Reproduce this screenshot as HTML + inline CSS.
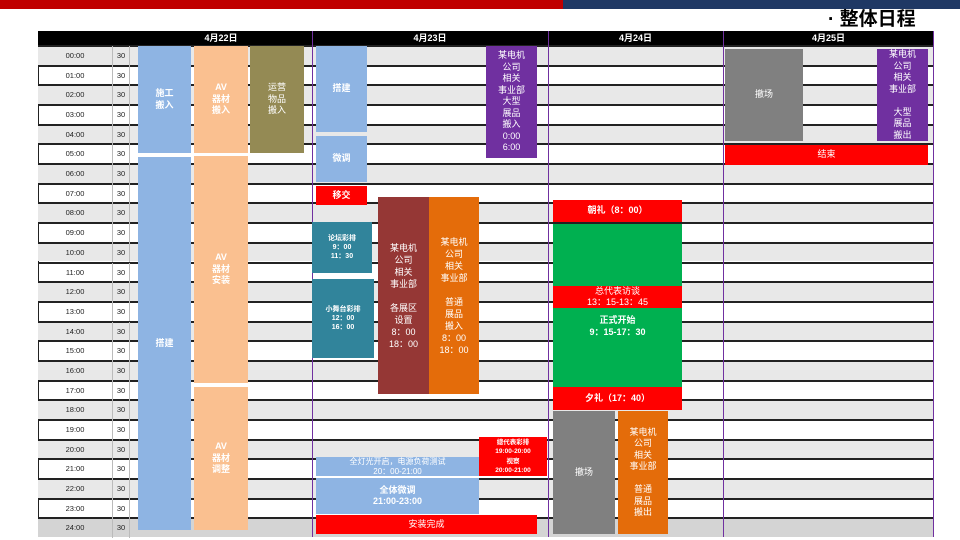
<!DOCTYPE html>
<html><head><meta charset="utf-8"><style>
*{margin:0;padding:0;box-sizing:border-box}
body{width:960px;height:540px;background:#fff;position:relative;overflow:hidden;font-family:"Liberation Sans","Noto Sans CJK SC",sans-serif}
.a{position:absolute}
.r{position:absolute;left:38px;width:896px;height:19.68px;border-top:2px solid #222}
.g{background:#e8e8e8}
.t{position:absolute;left:38px;width:74px;font-size:7.5px;text-align:center;color:#222;line-height:19px}
.m{position:absolute;left:112px;width:18px;font-size:7.5px;text-align:center;color:#222;line-height:19px;border-left:1px solid #bbb;border-right:1px solid #bbb;height:19.68px}
.b{position:absolute;display:flex;align-items:center;justify-content:center;text-align:center;color:#fff;font-size:9px;font-weight:bold;line-height:11.5px}
.v{position:absolute;top:31px;width:1px;height:506px;background:#7030a0}
.h{position:absolute;top:31px;height:14px;background:#000;color:#fff;font-size:9px;font-weight:bold;text-align:center;line-height:14px}
</style></head><body>
<div class="a" style="left:0;top:0;width:563px;height:9px;background:#c00000"></div>
<div class="a" style="left:563px;top:0;width:397px;height:9px;background:#1f3864"></div>
<div class="a" style="left:828px;top:8px;font-size:19px;color:#000;line-height:24px;font-weight:bold">· 整体日程</div>

<div class="a" style="left:38px;top:45px;width:896px;height:492px;border-bottom:2px solid #222;border-left:1px solid #222"></div>
<div class="r g" style="top:45px"></div><div class="r" style="top:64.7px"></div><div class="r g" style="top:84.4px"></div><div class="r" style="top:104px"></div><div class="r g" style="top:123.7px"></div><div class="r" style="top:143.4px"></div><div class="r g" style="top:163.1px"></div><div class="r" style="top:182.8px"></div><div class="r g" style="top:202.4px"></div><div class="r" style="top:222.1px"></div><div class="r g" style="top:241.8px"></div><div class="r" style="top:261.5px"></div><div class="r g" style="top:281.2px"></div><div class="r" style="top:300.8px"></div><div class="r g" style="top:320.5px"></div><div class="r" style="top:340.2px"></div><div class="r g" style="top:359.9px"></div><div class="r" style="top:379.6px"></div><div class="r g" style="top:399.2px"></div><div class="r" style="top:418.9px"></div><div class="r g" style="top:438.6px"></div><div class="r" style="top:458.3px"></div><div class="r g" style="top:478px"></div><div class="r" style="top:497.6px"></div><div class="r" style="top:517.3px;background:#d4d4d4"></div>

<div class="t" style="top:46px">00:00</div><div class="t" style="top:65.7px">01:00</div><div class="t" style="top:85.4px">02:00</div><div class="t" style="top:105px">03:00</div><div class="t" style="top:124.7px">04:00</div><div class="t" style="top:144.4px">05:00</div><div class="t" style="top:164.1px">06:00</div><div class="t" style="top:183.8px">07:00</div><div class="t" style="top:203.4px">08:00</div><div class="t" style="top:223.1px">09:00</div><div class="t" style="top:242.8px">10:00</div><div class="t" style="top:262.5px">11:00</div><div class="t" style="top:282.2px">12:00</div><div class="t" style="top:301.8px">13:00</div><div class="t" style="top:321.5px">14:00</div><div class="t" style="top:341.2px">15:00</div><div class="t" style="top:360.9px">16:00</div><div class="t" style="top:380.6px">17:00</div><div class="t" style="top:400.2px">18:00</div><div class="t" style="top:419.9px">19:00</div><div class="t" style="top:439.6px">20:00</div><div class="t" style="top:459.3px">21:00</div><div class="t" style="top:479px">22:00</div><div class="t" style="top:498.6px">23:00</div><div class="t" style="top:518.3px">24:00</div>
<div class="m" style="top:46px">30</div><div class="m" style="top:65.7px">30</div><div class="m" style="top:85.4px">30</div><div class="m" style="top:105px">30</div><div class="m" style="top:124.7px">30</div><div class="m" style="top:144.4px">30</div><div class="m" style="top:164.1px">30</div><div class="m" style="top:183.8px">30</div><div class="m" style="top:203.4px">30</div><div class="m" style="top:223.1px">30</div><div class="m" style="top:242.8px">30</div><div class="m" style="top:262.5px">30</div><div class="m" style="top:282.2px">30</div><div class="m" style="top:301.8px">30</div><div class="m" style="top:321.5px">30</div><div class="m" style="top:341.2px">30</div><div class="m" style="top:360.9px">30</div><div class="m" style="top:380.6px">30</div><div class="m" style="top:400.2px">30</div><div class="m" style="top:419.9px">30</div><div class="m" style="top:439.6px">30</div><div class="m" style="top:459.3px">30</div><div class="m" style="top:479px">30</div><div class="m" style="top:498.6px">30</div><div class="m" style="top:518.3px">30</div>

<div class="h" style="left:38px;width:274px;padding-left:92px">4月22日</div>
<div class="h" style="left:312px;width:236px">4月23日</div>
<div class="h" style="left:548px;width:175px">4月24日</div>
<div class="h" style="left:723px;width:211px">4月25日</div>
<div class="v" style="left:312px"></div><div class="v" style="left:548px"></div><div class="v" style="left:723px"></div><div class="v" style="left:933px"></div>

<!-- 4/22 -->
<div class="b" style="left:138px;top:46px;width:53px;height:107px;background:#8eb4e3">施工<br>搬入</div>
<div class="b" style="left:138px;top:157px;width:53px;height:373px;background:#8eb4e3">搭建</div>
<div class="b" style="left:194px;top:46px;width:54px;height:107px;background:#fac090">AV<br>器材<br>搬入</div>
<div class="b" style="left:194px;top:156px;width:54px;height:227px;background:#fac090">AV<br>器材<br>安装</div>
<div class="b" style="left:194px;top:387px;width:54px;height:143px;background:#fac090">AV<br>器材<br>调整</div>
<div class="b" style="left:250px;top:46px;width:54px;height:107px;background:#948a54;font-weight:normal">运营<br>物品<br>搬入</div>

<!-- 4/23 -->
<div class="b" style="left:316px;top:46px;width:51px;height:86px;background:#8eb4e3">搭建</div>
<div class="b" style="left:316px;top:136px;width:51px;height:46px;background:#8eb4e3">微调</div>
<div class="b" style="left:316px;top:186px;width:51px;height:19px;background:#f00">移交</div>
<div class="b" style="left:486px;top:46px;width:51px;height:112px;background:#7030a0;font-weight:normal">某电机<br>公司<br>相关<br>事业部<br>大型<br>展品<br>搬入<br>0:00<br>6:00</div>
<div class="b" style="left:312px;top:222px;width:60px;height:51px;background:#31849b;font-size:7px;line-height:9px">论坛彩排<br>9：00<br>11：30</div>
<div class="b" style="left:312px;top:279px;width:62px;height:79px;background:#31849b;font-size:7px;line-height:9px">小舞台彩排<br>12：00<br>16：00</div>
<div class="b" style="left:378px;top:197px;width:51px;height:197px;background:#953735;font-weight:normal;line-height:12px">某电机<br>公司<br>相关<br>事业部<br><br>各展区<br>设置<br>8：00<br>18：00</div>
<div class="b" style="left:429px;top:197px;width:50px;height:197px;background:#e46c0a;font-weight:normal;line-height:12px">某电机<br>公司<br>相关<br>事业部<br><br>普通<br>展品<br>搬入<br>8：00<br>18：00</div>
<div class="b" style="left:316px;top:457px;width:163px;height:19px;background:#8eb4e3;font-weight:normal;font-size:8px;line-height:10px">全灯光开启，电源负荷测试<br>20：00-21:00</div>
<div class="b" style="left:479px;top:437px;width:68px;height:39px;background:#f00;font-size:6.5px;line-height:9.5px">總代表彩排<br>19:00-20:00<br>视察<br>20:00-21:00</div>
<div class="b" style="left:316px;top:478px;width:163px;height:36px;background:#8eb4e3">全体微调<br>21:00-23:00</div>
<div class="b" style="left:316px;top:515px;width:221px;height:19px;background:#f00;font-weight:normal">安装完成</div>

<!-- 4/24 -->
<div class="b" style="left:553px;top:200px;width:129px;height:22px;background:#f00">朝礼（8：00）</div>
<div class="b" style="left:553px;top:224px;width:129px;height:62px;background:#00b050"></div>
<div class="b" style="left:553px;top:286px;width:129px;height:22px;background:#f00;font-weight:normal">总代表访谈<br>13：15-13：45</div>
<div class="b" style="left:553px;top:308px;width:129px;height:79px;background:#00b050;align-items:flex-start;padding-top:7px">正式开始<br>9：15-17：30</div>
<div class="b" style="left:553px;top:387px;width:129px;height:23px;background:#f00">夕礼（17：40）</div>
<div class="b" style="left:553px;top:411px;width:62px;height:123px;background:#808080;font-weight:normal">撤场</div>
<div class="b" style="left:618px;top:411px;width:50px;height:123px;background:#e46c0a;font-weight:normal">某电机<br>公司<br>相关<br>事业部<br><br>普通<br>展品<br>搬出</div>

<!-- 4/25 -->
<div class="b" style="left:725px;top:49px;width:78px;height:92px;background:#808080;font-weight:normal">撤场</div>
<div class="b" style="left:877px;top:49px;width:51px;height:92px;background:#7030a0;font-weight:normal;overflow:hidden">某电机<br>公司<br>相关<br>事业部<br><br>大型<br>展品<br>搬出</div>
<div class="b" style="left:725px;top:145px;width:203px;height:20px;background:#f00;font-weight:normal">结束</div>
</body></html>
